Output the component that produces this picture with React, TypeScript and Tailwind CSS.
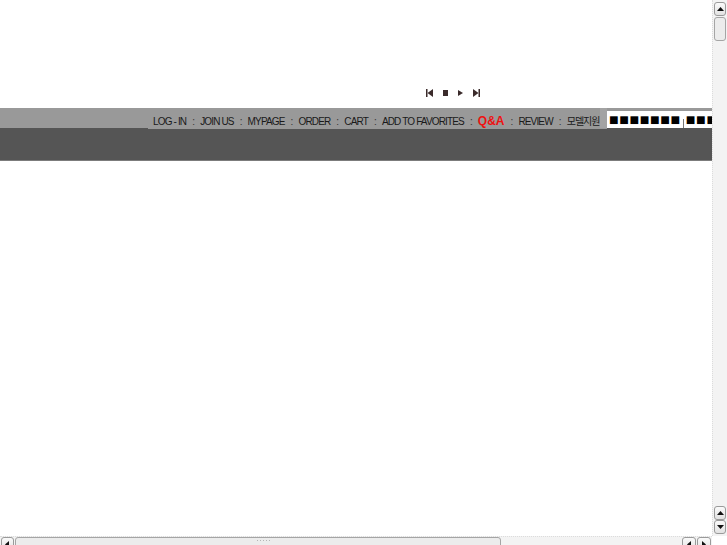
import React from "react";

const menu = [
  { label: "LOG - IN" },
  { label: "JOIN US" },
  { label: "MYPAGE" },
  { label: "ORDER" },
  { label: "CART" },
  { label: "ADD TO FAVORITES" },
  { label: "Q&A", hot: true },
  { label: "REVIEW" },
  { label: "모델지원" },
];

const Arrow = ({ dir }: { dir: "up" | "down" | "left" | "right" }) => {
  const pts = {
    up: "1,6 4.5,2 8,6",
    down: "1,2 4.5,6 8,2",
    left: "6,1 2,4.5 6,8",
    right: "2,1 6,4.5 2,8",
  }[dir];
  return (
    <svg width="9" height="9" viewBox="0 0 9 9">
      <polygon points={pts} fill="#111" />
    </svg>
  );
};

const ScrollBtn = ({ dir, className = "" }: { dir: "up" | "down" | "left" | "right"; className?: string }) => (
  <div
    className={`flex items-center justify-center rounded-[3px] border border-[#9a9a9a] bg-gradient-to-b from-[#fafafa] to-[#e2e2e2] ${className}`}
  >
    <Arrow dir={dir} />
  </div>
);

const Player = () => (
  <div className="flex items-center gap-[10px] text-[#3b2b2b]">
    <svg width="7" height="8" viewBox="0 0 7 8">
      <rect x="0" y="0" width="1.5" height="8" fill="currentColor" />
      <polygon points="7,0 1.5,4 7,8" fill="currentColor" />
    </svg>
    <svg width="5" height="8" viewBox="0 0 5 8">
      <rect x="0" y="1" width="5" height="6" fill="currentColor" />
    </svg>
    <svg width="5" height="8" viewBox="0 0 5 8">
      <polygon points="0,1 5,4 0,7" fill="currentColor" />
    </svg>
    <svg width="7" height="8" viewBox="0 0 7 8">
      <polygon points="0,0 5.5,4 0,8" fill="currentColor" />
      <rect x="5.5" y="0" width="1.5" height="8" fill="currentColor" />
    </svg>
  </div>
);

export default function App() {
  return (
    <div className="flex h-[545px] w-[727px] flex-col overflow-hidden bg-white font-['Liberation_Sans','Noto_Sans_CJK_KR',sans-serif]">
      <div className="flex min-h-0 flex-1">
        {/* page */}
        <div className="flex min-w-0 flex-1 flex-col">
          <div className="flex h-[108px] items-end justify-start pb-[11px] pl-[426px]">
            <Player />
          </div>

          <div className="flex h-[20px] bg-[#999999]">
            <div className="w-[148px] shrink-0" />
            <nav className="flex w-[452px] shrink-0 items-center whitespace-nowrap pl-[5px] pt-[6px] text-[10px] tracking-[-0.85px] text-[#1a1a1a]">
              {menu.map((m, i) => (
                <React.Fragment key={m.label}>
                  {i > 0 && <span className="px-[6px] text-[#333]">:</span>}
                  {m.hot ? (
                    <span className="text-[12px] font-bold tracking-[0px] text-[#ee1111]">{m.label}</span>
                  ) : (
                    <span className={/[가-힣]/.test(m.label) ? "text-[10px] tracking-[-1px]" : ""}>{m.label}</span>
                  )}
                </React.Fragment>
              ))}
            </nav>
            <div className="h-[22px] w-[7px] shrink-0 bg-[#a3a3a3]" />
            <div className="min-w-0 flex-1 pt-[3px]">
              <div className="flex h-[17px] items-center overflow-hidden whitespace-nowrap bg-white pl-[2px] text-[16px] leading-none tracking-[0.6px] text-black">
                <span>■■■■■■■</span>
                <span className="mx-[2px] h-[9px] w-px shrink-0 self-end bg-[#777]" />
                <span>■■■</span>
              </div>
            </div>
          </div>

          <div className="flex h-[33px] flex-col border-b border-[#7c7c7c] bg-[#555555]">
            <div className="ml-[148px] h-px w-[459px] bg-[#999999]" />
          </div>

          <div className="flex-1 bg-white" />
        </div>

        {/* vertical scrollbar */}
        <div className="flex w-[15px] flex-col border-l border-dotted border-[#dcdcdc] bg-[#f3f3f3] px-px py-[2px]">
          <ScrollBtn dir="up" className="h-[14px]" />
          <div className="mt-px h-[24px] rounded-[3px] border border-[#a5a5a5] bg-[#ececec]" />
          <div className="flex-1" />
          <ScrollBtn dir="up" className="h-[14px]" />
          <ScrollBtn dir="down" className="h-[14px]" />
        </div>
      </div>

      {/* horizontal scrollbar */}
      <div className="flex h-[9px] items-start">
        <div className="flex flex-1 items-start gap-px border-t border-dotted border-[#dcdcdc] bg-[#f3f3f3] pl-px">
          <ScrollBtn dir="left" className="h-[14px] w-[13px]" />
          <div className="flex h-[14px] w-[486px] justify-center rounded-[3px] border border-[#a5a5a5] bg-[#ececec] pt-[2px]">
            <div className="grid grid-cols-5 gap-x-[2px] gap-y-[2px] pl-[10px]">
              {Array.from({ length: 10 }).map((_, i) => (
                <span key={i} className="h-px w-px bg-[#b5b5b5]" />
              ))}
            </div>
          </div>
          <div className="flex-1" />
          <ScrollBtn dir="left" className="h-[14px] w-[14px]" />
          <ScrollBtn dir="right" className="mr-px h-[14px] w-[14px]" />
        </div>
        <div className="h-full w-[15px] bg-white" />
      </div>
    </div>
  );
}
